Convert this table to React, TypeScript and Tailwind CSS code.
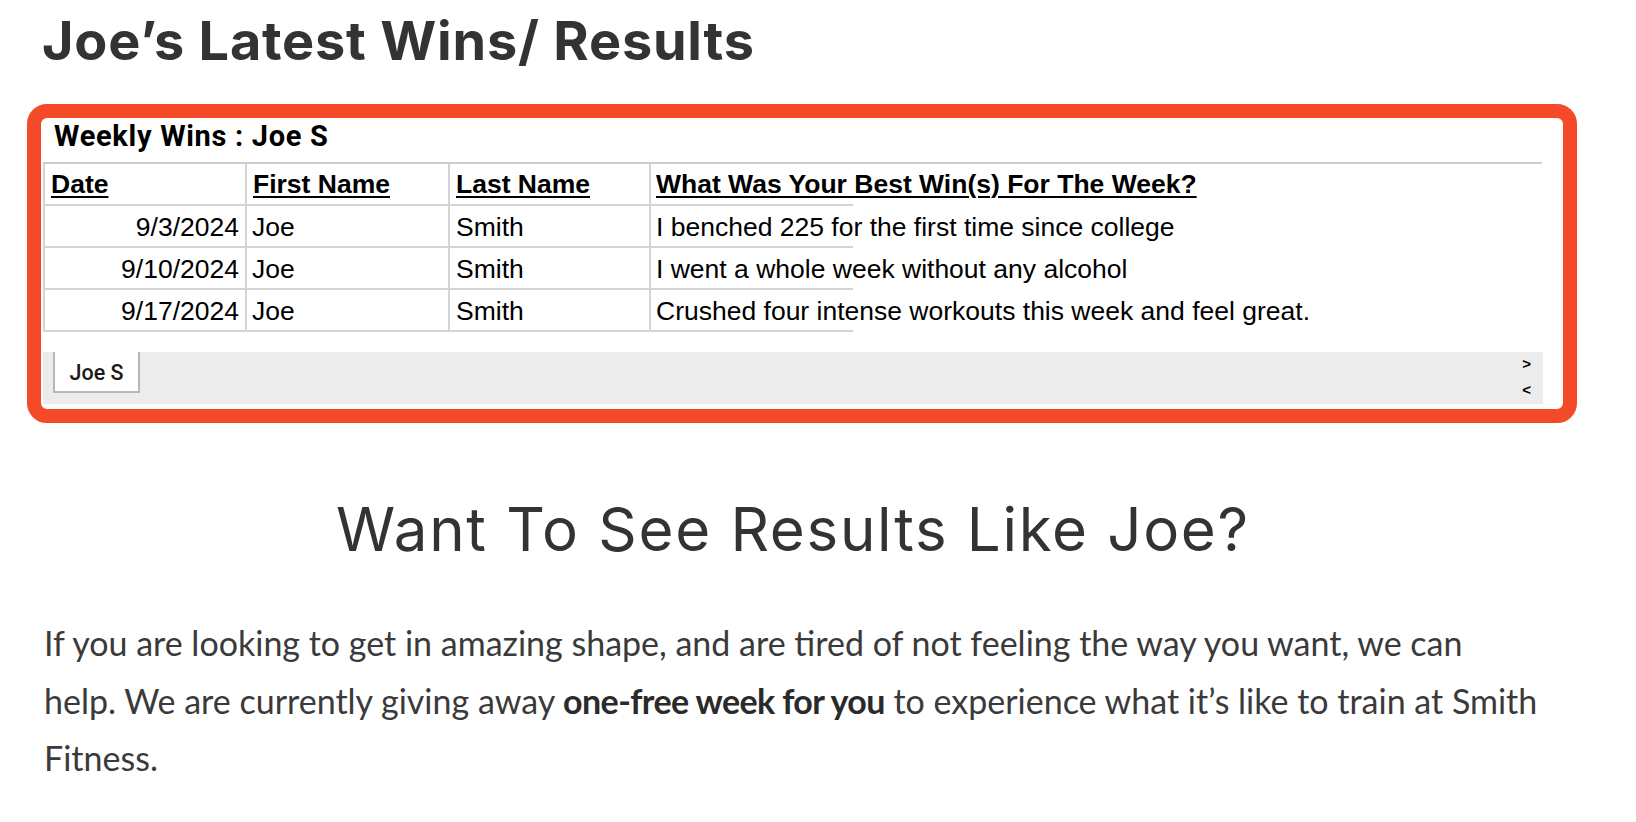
import React from 'react';

const rows = [
  { date: '9/3/2024', first: 'Joe', last: 'Smith', win: 'I benched 225 for the first time since college' },
  { date: '9/10/2024', first: 'Joe', last: 'Smith', win: 'I went a whole week without any alcohol' },
  { date: '9/17/2024', first: 'Joe', last: 'Smith', win: 'Crushed four intense workouts this week and feel great.' },
];

const cell = 'h-full border-l-2 border-b-2 border-[#d4d4d4] flex items-center';

function WinsSheet() {
  return (
    <div className="mt-[33px] w-[1550px] h-[319px] border-[14px] border-[#f44a27] rounded-[20px] bg-white">
      <div className="pl-[13px] h-[36px] mb-[8px] text-[29px] leading-[36px] font-bold tracking-[0.7px] text-black font-['Roboto',sans-serif]">
        Weekly Wins : Joe S
      </div>

      <div className="ml-[2px] w-[1499px] border-t-2 border-[#cccccc] font-['Liberation_Sans',Arial,sans-serif]">
        <div className="flex h-[42px] font-bold text-[26.5px] text-black underline underline-offset-[3px] decoration-2">
          <div className={`${cell} w-[202px] pl-[6px] pt-[2px]`}>Date</div>
          <div className={`${cell} w-[203px] pl-[6px] pt-[2px]`}>First Name</div>
          <div className={`${cell} w-[201px] pl-[6px] pt-[2px]`}>Last Name</div>
          <div className={`${cell} w-[204px] pl-[5px] pt-[2px] whitespace-nowrap`}>What Was Your Best Win(s) For The Week?</div>
        </div>
        {rows.map((r) => (
          <div key={r.date} className="flex h-[42px] text-[26.5px] text-black">
            <div className={`${cell} w-[202px] pr-[6px] pt-[3px] justify-end`}>{r.date}</div>
            <div className={`${cell} w-[203px] pl-[5px] pt-[3px]`}>{r.first}</div>
            <div className={`${cell} w-[201px] pl-[6px] pt-[3px]`}>{r.last}</div>
            <div className={`${cell} w-[204px] pl-[5px] pt-[3px] whitespace-nowrap`}>{r.win}</div>
          </div>
        ))}
      </div>

      <div className="mt-[20px] ml-[2px] w-[1500px] h-[52px] bg-[#ececec] flex justify-between">
        <div className="ml-[10px] w-[87px] h-[41px] pt-[3px] bg-white border-2 border-t-0 border-[#b8b8b8] flex items-center justify-center text-[21.5px] font-medium text-[#1a1a1a] font-['Roboto',sans-serif]">
          Joe S
        </div>
        <div className="mr-[12px] pt-[1px] flex flex-col gap-[4px] text-[15px] font-bold leading-[22px] text-black font-['Liberation_Sans',Arial,sans-serif]">
          <span>&gt;</span>
          <span>&lt;</span>
        </div>
      </div>
    </div>
  );
}

export default function App() {
  return (
    <div className="w-[1636px] h-[822px] bg-white overflow-hidden">
      <div className="ml-[27px]">
        <h1 className="pt-[11px] pl-[15px] text-[54px] leading-[60px] font-bold text-[#333333] font-['Inter',sans-serif] tracking-[0.8px]">
          Joe’s Latest Wins/ Results
        </h1>

        <WinsSheet />

        <h2 className="mt-[72px] w-[1532px] text-center text-[60px] leading-[68px] font-normal text-[#333333] font-['Inter',sans-serif] tracking-[1.7px]">
          Want To See Results Like Joe?
        </h2>

        <p className="mt-[51px] pl-[17px] text-[34px] leading-[57.6px] text-[#3a3a3a] font-['Lato',sans-serif]">
          If you are looking to get in amazing shape, and are tired of not feeling the way you want, we can
          <br />
          help. We are currently giving away <strong className="font-bold text-[#2a2a2a] tracking-[-0.6px]">one-free week for you</strong> to experience what it’s like to train at Smith
          <br />
          Fitness.
        </p>
      </div>
    </div>
  );
}
